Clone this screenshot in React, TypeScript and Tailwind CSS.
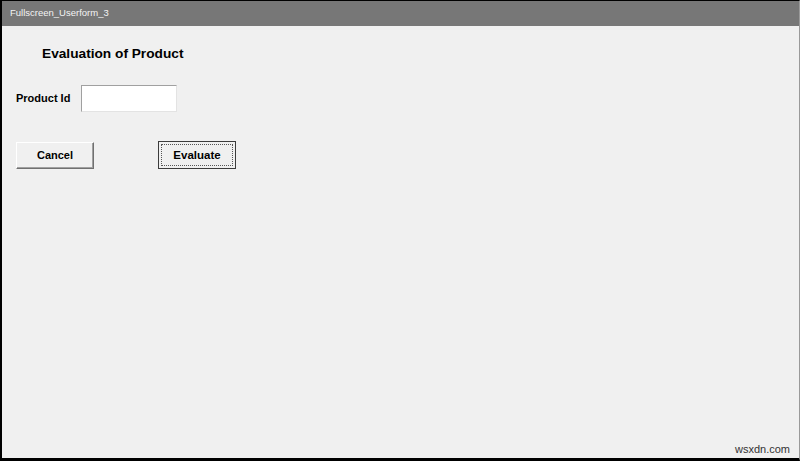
import React from "react";

export default function App() {
  return (
    <div className="w-[800px] h-[461px] bg-[#f0f0f0] border-l-2 border-t border-b-[3px] border-r border-l-black border-t-black border-b-black border-r-[#9a9a9a] flex flex-col overflow-hidden" style={{ fontFamily: '"Liberation Sans", Arial, sans-serif' }}>
      <div className="h-[25px] bg-[#777777] flex items-center pl-[8px] text-[9.5px] text-[#f4f4f4] shrink-0" style={{ fontFamily: '"Liberation Sans", Arial, sans-serif' }}>
        Fullscreen_Userform_3
      </div>
      <div className="flex-1 flex flex-col relative">
        <div className="mt-[18px] ml-[40px] text-[13.7px] font-bold text-black leading-[20px]">
          Evaluation of Product
        </div>
        <div className="mt-[21px] ml-[14px] flex items-center">
          <span className="text-[11px] font-bold text-black w-[65px]">Product Id</span>
          <div className="w-[96px] h-[27px] bg-white border-t border-l border-t-[#a0a0a0] border-l-[#a0a0a0] border-b border-r border-b-[#e3e3e3] border-r-[#e3e3e3]" />
        </div>
        <div className="mt-[29px] ml-[14px] flex items-center">
          <button className="w-[78px] h-[27px] bg-[#f0f0f0] border border-t-white border-l-white border-b-[#707070] border-r-[#707070] shadow-[inset_-1px_-1px_0_#a0a0a0] text-[11px] font-bold text-black flex items-center justify-center">
            Cancel
          </button>
          <button className="ml-[64px] w-[78px] h-[28px] bg-[#f0f0f0] border border-[#3c3c3c] p-[2px] flex">
            <span className="flex-1 border border-dotted border-[#555] flex items-center justify-center text-[11.5px] font-bold text-black pt-[1px]">
              Evaluate
            </span>
          </button>
        </div>
        <div className="absolute right-[9px] bottom-[1px] text-[11px] text-[#333]" style={{ fontFamily: '"Liberation Sans", Arial, sans-serif' }}>
          wsxdn.com
        </div>
      </div>
    </div>
  );
}
